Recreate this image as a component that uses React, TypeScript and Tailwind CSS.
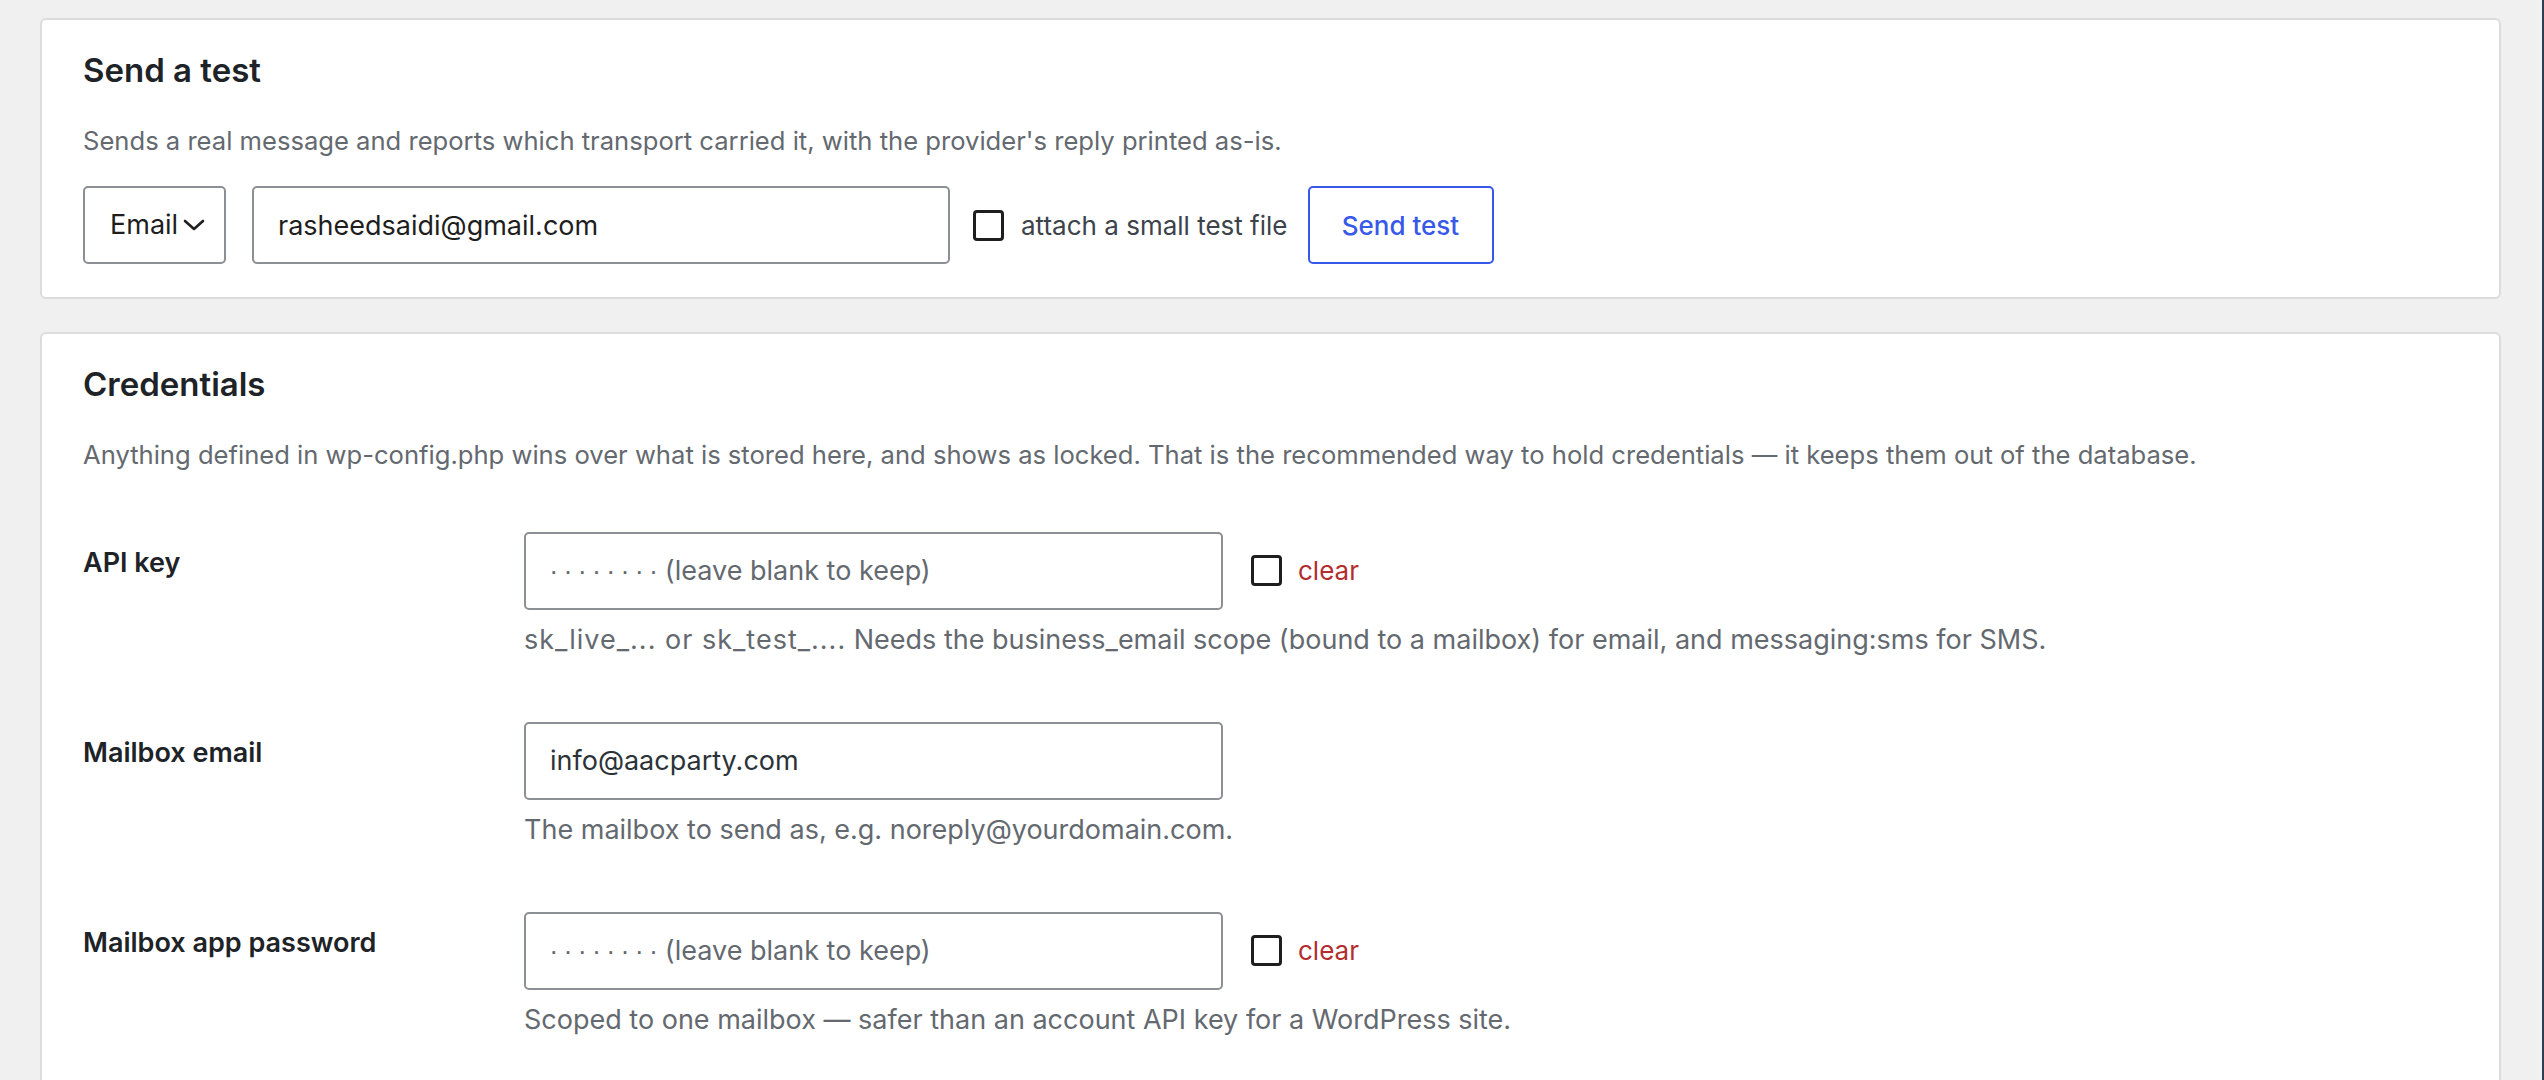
import React from "react";

interface CardProps {
  title: string;
  intro: string;
  children?: React.ReactNode;
}

interface FieldRowProps {
  label: string;
  help: React.ReactNode;
  value?: string;
  placeholder?: string;
  clearable?: boolean;
}

// masked value hint shown in secret fields
const KEEP_HINT = "∙\u2005∙\u2005∙\u2005∙\u2005∙\u2005∙\u2005∙\u2005∙ (leave blank to keep)";

const Chevron = () => (
  <svg width="22" height="12" viewBox="0 0 22 12" fill="none" stroke="#1e1e1e" strokeWidth="2.6" strokeLinecap="round" strokeLinejoin="round">
    <path d="M2 2l9 8 9-8" />
  </svg>
);

const Checkbox = ({ className = "" }: { className?: string }) => (
  <input
    type="checkbox"
    className={`h-[31px] w-[31px] shrink-0 appearance-none rounded-[4px] border-[3px] border-[#1e1e1e] bg-white ${className}`}
  />
);

const Card: React.FC<CardProps> = ({ title, intro, children }) => (
  <section className="rounded-[6px] border-2 border-[#dcdcde] bg-white px-[41px] pt-[29px] pb-[33px]">
    <h2 className="text-[33px] leading-[1.3] font-semibold text-[#1d2327]">{title}</h2>
    <p className="mt-[30px] text-[25.6px] leading-[1.5] text-[#646970]">{intro}</p>
    {children}
  </section>
);

const FieldRow: React.FC<FieldRowProps> = ({ label, help, value, placeholder, clearable }) => (
  <div className="flex h-[190px]">
    <div className="w-[441px] shrink-0 pt-[43px] text-[27px] leading-[1.3] font-semibold text-[#1d2327]">{label}</div>
    <div className="pt-[30px]">
      <div className="flex items-center">
        <input
          type="text"
          defaultValue={value}
          placeholder={placeholder}
          className="h-[78px] w-[699px] rounded-[5px] border-2 border-[#8c8f94] bg-white px-[24px] text-[27px] text-[#2c3338] outline-none placeholder:text-[#646970]"
        />
        {clearable && (
          <label className="ml-[28px] flex items-center">
            <Checkbox />
            <span className="ml-[16px] text-[26px] text-[#b32d2e]">clear</span>
          </label>
        )}
      </div>
      <p className="mt-[10px] text-[27px] leading-[1.5] text-[#646970]">{help}</p>
    </div>
  </div>
);

export default function App() {
  return (
    <div className="flex min-h-screen bg-[#f0f0f1] font-['Inter','Noto_Sans',sans-serif]">
      <main className="flex-1 pt-[18px] pl-[40px] pr-[41px]">
        <Card
          title="Send a test"
          intro="Sends a real message and reports which transport carried it, with the provider's reply printed as-is."
        >
          <div className="mt-[26px] flex items-center">
            <div className="flex h-[78px] w-[143px] shrink-0 items-center rounded-[5px] border-2 border-[#8c8f94] pl-[25px] text-[27px] text-[#1e1e1e]">
              <span>Email</span>
              <span className="ml-[5px] flex">
                <Chevron />
              </span>
            </div>
            <input
              type="email"
              defaultValue="rasheedsaidi@gmail.com"
              className="ml-[26px] h-[78px] w-[698px] rounded-[5px] border-2 border-[#8c8f94] bg-white px-[24px] text-[27px] text-[#1e1e1e] outline-none"
            />
            <label className="ml-[23px] flex items-center">
              <Checkbox />
              <span className="ml-[17px] text-[26px] text-[#3c434a]">attach a small test file</span>
            </label>
            <button className="ml-[20px] h-[78px] w-[186px] rounded-[5px] border-2 border-[#3858e9] bg-white text-[26px] font-medium text-[#3858e9]">
              Send test
            </button>
          </div>
        </Card>

        <div className="mt-[33px]">
          <Card
            title="Credentials"
            intro="Anything defined in wp-config.php wins over what is stored here, and shows as locked. That is the recommended way to hold credentials — it keeps them out of the database."
          >
            <div className="mt-[27px]">
              <FieldRow
                label="API key"
                placeholder={KEEP_HINT}
                clearable
                help={
                  <>
                    <span className="tracking-[1px]">sk_live_... or sk_test_....</span> Needs the business_email scope
                    (bound to a mailbox) for email, and messaging:sms for SMS.
                  </>
                }
              />
              <FieldRow
                label="Mailbox email"
                value="info@aacparty.com"
                help="The mailbox to send as, e.g. noreply@yourdomain.com."
              />
              <FieldRow
                label="Mailbox app password"
                placeholder={KEEP_HINT}
                clearable
                help="Scoped to one mailbox — safer than an account API key for a WordPress site."
              />
            </div>
          </Card>
        </div>
      </main>
      <div className="w-[2px] shrink-0 bg-[#2d3e52]" />
    </div>
  );
}
